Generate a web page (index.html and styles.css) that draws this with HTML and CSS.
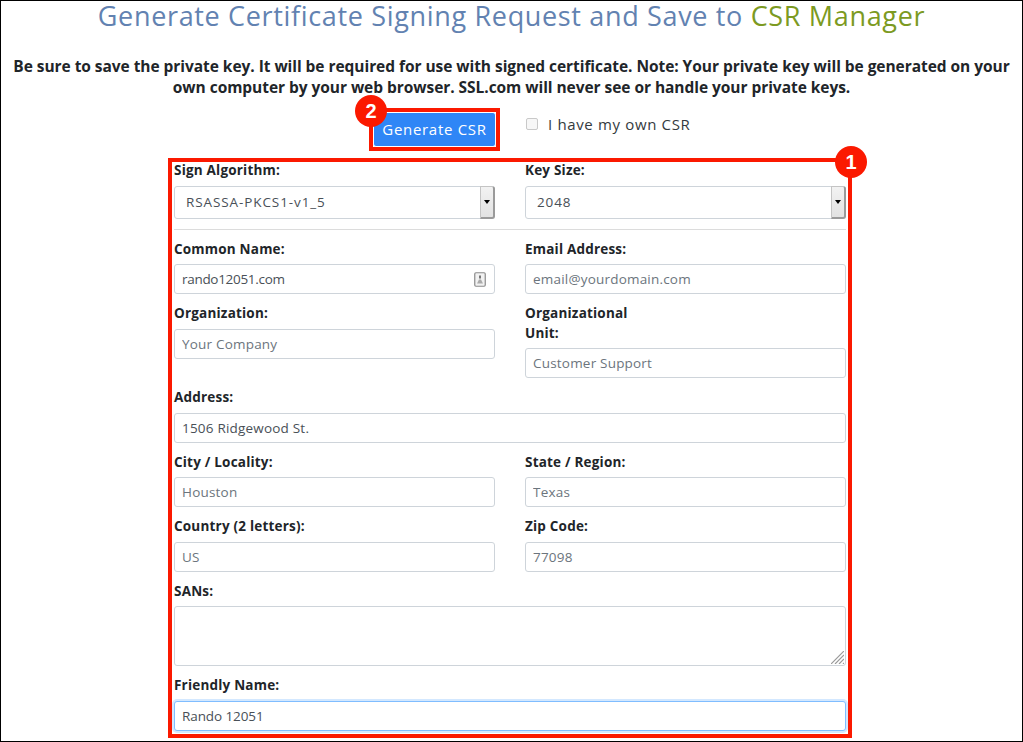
FILE: index.html
```html
<!DOCTYPE html>
<html lang="en">
<head>
<meta charset="utf-8">
<title>Generate CSR</title>
<link rel="stylesheet" href="styles.css">
</head>
<body>
<main class="page">
  <h1 class="title">Generate Certificate Signing Request and Save to <span class="title-accent">CSR Manager</span></h1>
  <p class="note">Be sure to save the private key. It will be required for use with signed certificate. Note: Your private key will be generated on your own computer by your web browser. SSL.com will never see or handle your private keys.</p>
  <div class="actions">
    <div class="btn-frame">
      <button class="btn" type="button">Generate CSR</button>
      <span class="badge badge-btn">2</span>
    </div>
    <label class="own-csr"><span class="check"></span>I have my own CSR</label>
  </div>
  <form class="form">
    <span class="badge badge-form">1</span>
    <div class="row row-first">
      <div class="field">
        <label class="label">Sign Algorithm:</label>
        <div class="select"><span class="select-value">RSASSA-PKCS1-v1_5</span><span class="stepper"><span class="arrow"></span></span></div>
      </div>
      <div class="field">
        <label class="label">Key Size:</label>
        <div class="select"><span class="select-value">2048</span><span class="stepper"><span class="arrow"></span></span></div>
      </div>
    </div>
    <hr class="rule">
    <div class="row">
      <div class="field">
        <label class="label">Common Name:</label>
        <div class="input-wrap">
          <input class="input input-tight" value="rando12051.com">
          <svg class="contact-icon" viewBox="0 0 12 15" width="12" height="15" aria-hidden="true">
            <rect x="0.75" y="0.75" width="10.500" height="13.500" rx="1.2" fill="#f2f2f2" stroke="#8a8a8a" stroke-width="1.2"/>
            <rect x="5" y="3.500" width="2" height="3" fill="#777"/>
            <path d="M3 11.500 L5 7.500 H7 L9 11.500z" fill="#aaa"/>
          </svg>
        </div>
      </div>
      <div class="field">
        <label class="label">Email Address:</label>
        <input class="input" placeholder="email@yourdomain.com">
      </div>
    </div>
    <div class="row">
      <div class="field">
        <label class="label">Organization:</label>
        <input class="input" placeholder="Your Company">
      </div>
      <div class="field">
        <label class="label">Organizational<br>Unit:</label>
        <input class="input" placeholder="Customer Support">
      </div>
    </div>
    <div class="field">
      <label class="label">Address:</label>
      <input class="input" value="1506 Ridgewood St.">
    </div>
    <div class="row">
      <div class="field">
        <label class="label">City / Locality:</label>
        <input class="input" placeholder="Houston">
      </div>
      <div class="field">
        <label class="label">State / Region:</label>
        <input class="input" placeholder="Texas">
      </div>
    </div>
    <div class="row">
      <div class="field">
        <label class="label">Country (2 letters):</label>
        <input class="input" placeholder="US">
      </div>
      <div class="field">
        <label class="label">Zip Code:</label>
        <input class="input" placeholder="77098">
      </div>
    </div>
    <div class="field">
      <label class="label">SANs:</label>
      <div class="input-wrap">
        <textarea class="input textarea"></textarea>
        <svg class="grip" viewBox="0 0 13 13" width="13" height="13" aria-hidden="true">
          <path d="M0 13 13 0M4 13 13 4M8 13 13 8M12 13 13 12" stroke="#9a9a9a" stroke-width="1.200" fill="none"/>
        </svg>
      </div>
    </div>
    <div class="field">
      <label class="label">Friendly Name:</label>
      <input class="input input-focus" value="Rando 12051">
    </div>
  </form>
</main>
</body>
</html>
```
FILE: styles.css
```css
* { box-sizing: border-box; }
html, body { margin: 0; padding: 0; background: #fff; }
body { width: 1023px; height: 742px; overflow: hidden; font-family: "Open Sans", "Liberation Sans", sans-serif; color: #212529; }
.page { height: 742px; border: 1px solid #000; }
.title { margin: 0; text-align: center; font-weight: 400; font-size: 27px; line-height: 30px; letter-spacing: .66px; color: #6282b1; }
.title-accent { color: #7c9a22; }
.note { margin: 25px auto 0; width: 1012px; text-align: center; font-weight: 700; font-size: 15.5px; line-height: 21px; letter-spacing: -.05px; color: #212529; }
.actions { display: flex; margin: 10px 0 0 368px; align-items: flex-start; }
.btn-frame { position: relative; width: 131px; height: 43px; border: 4px solid #fb1900; }
.btn { display: block; width: 100%; height: 100%; padding: 0; border: 1px solid #fff; border-radius: 3px; background: #2f86f6; color: #fff; font: 400 15px/1 "Open Sans", sans-serif; letter-spacing: .7px; }
.badge { position: absolute; width: 32px; height: 32px; border-radius: 50%; background: #fb1900; color: #fff; font: 700 20px/32px "Liberation Sans", sans-serif; text-align: center; }
.badge-btn { left: -18px; top: -17px; }
.badge-form { right: -19px; top: -16px; }
.own-csr { display: flex; align-items: center; margin: 5px 0 0 26px; font-size: 15px; line-height: 22px; letter-spacing: .65px; color: #343a40; }
.check { width: 12px; height: 12px; margin-right: 10px; border: 1px solid #c9c9c9; border-radius: 2px; background: #f7f7f7; }
.form { position: relative; width: 684px; height: 580px; margin: 7px 0 0 167px; padding: 0 2px; border: 4px solid #fb1900; }
.row { display: grid; grid-template-columns: 321px 321px; column-gap: 30px; }
.row-first { margin-top: -1px; }
.field { display: flex; flex-direction: column; padding-bottom: 10px; }
.label { display: block; margin-bottom: 5px; font-weight: 700; font-size: 13.5px; line-height: 19.5px; letter-spacing: .2px; color: #212529; }
.input { display: block; width: 100%; height: 30px; padding: 0 7px; border: 1px solid #ced4da; border-radius: 3px; background: #fff; font: 400 13.5px "Open Sans", sans-serif; letter-spacing: .2px; color: #495057; outline: none; }
.input::placeholder { color: #6c757d; opacity: 1; }
.input-tight { letter-spacing: -.3px; }
.textarea { height: 60px; padding-top: 6px; resize: none; }
.input-focus { letter-spacing: -.1px; border-color: #80bdff; box-shadow: 0 0 0 2px rgba(128, 189, 255, .35); }
.input-wrap { position: relative; }
.contact-icon { position: absolute; right: 9px; top: 8px; }
.grip { position: absolute; right: 2px; bottom: 2px; }
.select { position: relative; display: flex; align-items: center; height: 33px; padding-left: 11px; border: 1px solid #ced4da; border-radius: 3px; font-size: 13.5px; letter-spacing: .9px; color: #495057; }
.select-value { flex: 1; }
.stepper { position: absolute; right: -1px; top: -1px; bottom: -1px; width: 15px; display: flex; align-items: center; justify-content: center; border-radius: 0 3px 3px 0; background: linear-gradient(#f2f2f2, #e2e2e2); border-top: 1px solid #c4c4c4; border-left: 1px solid #c4c4c4; border-right: 2px solid #9a9a9a; border-bottom: 2px solid #9a9a9a; }
.arrow { width: 0; height: 0; border-left: 3.5px solid transparent; border-right: 3.5px solid transparent; border-top: 4px solid #000; }
.rule { height: 1px; margin: 0 0 10px; border: 0; background: #dcdcdc; }
```
